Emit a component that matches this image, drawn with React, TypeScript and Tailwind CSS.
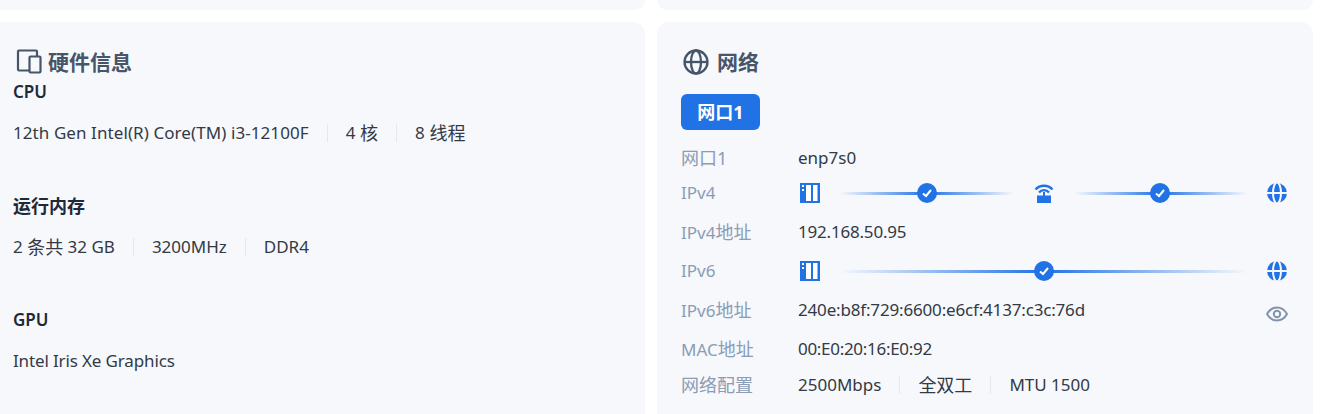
const font = "font-['Noto_Sans','Noto_Sans_CJK_SC',sans-serif]";

// CJK runs sit a touch larger than the latin text next to them
function Z({ children }: { children: React.ReactNode }) {
  return <span className="text-[18px]">{children}</span>;
}

function DevicesIcon() {
  return (
    <svg width="26" height="26" viewBox="0 0 26 26" fill="none" stroke="#475569" strokeWidth="2.200" className="shrink-0">
      <path d="M21 7V2.500a1 1 0 0 0-1-1H3a1 1 0 0 0-1 1V20.500a1 1 0 0 0 1 1h10" />
      <rect x="13.500" y="7.500" width="11" height="16" rx="1" />
    </svg>
  );
}

function GlobeOutline() {
  return (
    <svg width="26" height="26" viewBox="0 0 26 26" fill="none" stroke="#475569" strokeWidth="2.300" className="shrink-0">
      <circle cx="13" cy="13" r="11.500" />
      <ellipse cx="13" cy="13" rx="5" ry="11.500" />
      <path d="M2 13h22" />
    </svg>
  );
}

function ServerIcon() {
  return (
    <svg width="20" height="20" viewBox="0 0 20 20" className="shrink-0">
      <rect width="20" height="20" fill="#2172e5" />
      <rect x="6" y="2" width="5" height="16" fill="#fff" />
      <rect x="13" y="2" width="4.500" height="16" fill="#fff" />
      <rect x="2" y="2" width="2" height="2" fill="#fff" />
      <rect x="2" y="6" width="2" height="2" fill="#fff" />
    </svg>
  );
}

function RouterIcon() {
  return (
    <svg width="20" height="20" viewBox="0 0 20 20" fill="none" className="shrink-0">
      <path d="M1.500 6.500a11.500 11.500 0 0 1 17 0" stroke="#2172e5" strokeWidth="2.400" />
      <path d="M5 9.500a6.500 6.500 0 0 1 10 0" stroke="#2172e5" strokeWidth="2.400" />
      <rect x="9" y="9" width="2" height="5" fill="#2172e5" />
      <rect x="3" y="12.500" width="14" height="7.500" fill="#2172e5" />
    </svg>
  );
}

function GlobeSolid() {
  return (
    <svg width="20" height="20" viewBox="0 0 20 20" className="shrink-0">
      <circle cx="10" cy="10" r="10" fill="#2172e5" />
      <ellipse cx="10" cy="10" rx="4" ry="10.500" fill="none" stroke="#f6f8fc" strokeWidth="2" />
      <rect x="0" y="9" width="20" height="2" fill="#f6f8fc" />
    </svg>
  );
}

function EyeIcon() {
  return (
    <svg width="22" height="18" viewBox="0 0 22 18" fill="none" stroke="#8294ad" strokeWidth="2" className="shrink-0">
      <path d="M1 9c2.500-4.400 6-6.500 10-6.500S18.500 4.600 21 9c-2.500 4.400-6 6.500-10 6.500S3.500 13.400 1 9z" />
      <circle cx="11" cy="9" r="3.200" />
    </svg>
  );
}

function Check() {
  return (
    <span className="absolute top-1/2 left-1/2 flex h-5 w-5 -translate-x-1/2 -translate-y-1/2 items-center justify-center rounded-full bg-[#2172e5]">
      <svg width="12" height="12" viewBox="0 0 12 12" fill="none" stroke="#fff" strokeWidth="2">
        <path d="M2 6.500 5 9l5-6" />
      </svg>
    </span>
  );
}

function Line() {
  return (
    <div className="relative h-[3px] flex-1 bg-[linear-gradient(90deg,transparent,#2172e5_50%,transparent)]">
      <Check />
    </div>
  );
}

function Divider() {
  return <span className="mx-[18px] h-[18px] w-px bg-[#e3e7ee]" />;
}

function Info({ title, items, tracking = "" }: { title: React.ReactNode; items: React.ReactNode[]; tracking?: string }) {
  return (
    <div className="h-[114px]">
      <div className="h-6 text-[17px] leading-6 font-semibold text-[#1f2937]">{title}</div>
      <div className={`mt-[17px] flex h-6 items-center text-[17px] leading-6 text-[#333a45] ${tracking}`}>
        {items.map((item, i) => (
          <span key={i} className="flex items-center whitespace-pre">
            {i > 0 && <Divider />}
            {item}
          </span>
        ))}
      </div>
    </div>
  );
}

function Row({ label, h, children }: { label: React.ReactNode; h: string; children: React.ReactNode }) {
  return (
    <div className={`flex items-center ${h}`}>
      <div className="w-[117px] shrink-0 text-[17px] text-[#8b9cb5]">{label}</div>
      <div className="flex min-w-0 flex-1 items-center text-[17px] text-[#333a45]">{children}</div>
    </div>
  );
}

export default function App() {
  return (
    <div className={`h-[414px] w-[1330px] overflow-hidden bg-white ${font}`}>
      <div className="grid grid-cols-[645px_656px] gap-x-3 gap-y-3">
        <div className="h-[10px] rounded-br-xl bg-[#f6f8fc]" />
        <div className="h-[10px] rounded-b-xl bg-[#f6f8fc]" />

        <div className="h-[392px] rounded-tr-xl bg-[#f6f8fc] pt-[27px] pl-[13px]">
          <div className="flex h-[26px] items-center gap-[6px] pl-[3px]">
            <DevicesIcon />
            <h2 className="text-[21px] leading-7 font-bold text-[#475569]">硬件信息</h2>
          </div>
          <div className="mt-[5px]">
            <Info
              title="CPU"
              tracking="tracking-[0.08px]"
              items={["12th Gen Intel(R) Core(TM) i3-12100F", <>4 <Z>核</Z></>, <>8 <Z>线程</Z></>]}
            />
            <Info title={<Z>运行内存</Z>} items={[<>2 <Z>条共</Z> 32 GB</>, "3200MHz", "DDR4"]} />
            <Info title="GPU" tracking="tracking-[-0.14px]" items={["Intel Iris Xe Graphics"]} />
          </div>
        </div>

        <div className="h-[392px] rounded-t-xl bg-[#f6f8fc] pt-[27px] pl-6">
          <div className="flex h-[26px] items-center gap-[8px] pl-[2px]">
            <GlobeOutline />
            <h2 className="text-[21px] leading-7 font-bold text-[#475569]">网络</h2>
          </div>
          <button className="mt-[19px] flex h-9 w-[79px] items-center justify-center rounded-md bg-[#2172e5] text-[18px] font-bold text-white">
            网口1
          </button>
          <div className="mt-[14px] w-[608px]">
            <Row label={<Z>网口1</Z>} h="h-7">enp7s0</Row>
            <Row label="IPv4" h="h-[42px]">
              <div className="ml-[2px] flex w-[487px] items-center gap-5">
                <ServerIcon />
                <Line />
                <RouterIcon />
                <Line />
                <GlobeSolid />
              </div>
            </Row>
            <Row label={<>IPv4<Z>地址</Z></>} h="h-9">
              <span className="tracking-[-0.2px]">192.168.50.95</span>
            </Row>
            <Row label="IPv6" h="h-[42px]">
              <div className="ml-[2px] flex w-[487px] items-center gap-5">
                <ServerIcon />
                <Line />
                <GlobeSolid />
              </div>
            </Row>
            <Row label={<>IPv6<Z>地址</Z></>} h="h-9">
              <span className="tracking-[-0.17px]">240e:b8f:729:6600:e6cf:4137:c3c:76d</span>
              <span className="relative top-1 mr-[1px] ml-auto"><EyeIcon /></span>
            </Row>
            <Row label={<>MAC<Z>地址</Z></>} h="h-[42px]">
              <span className="tracking-[-0.3px]">00:E0:20:16:E0:92</span>
            </Row>
            <Row label={<Z>网络配置</Z>} h="h-[30px]">
              <span>2500Mbps</span>
              <Divider />
              <Z>全双工</Z>
              <Divider />
              <span>MTU 1500</span>
            </Row>
          </div>
        </div>
      </div>
    </div>
  );
}
